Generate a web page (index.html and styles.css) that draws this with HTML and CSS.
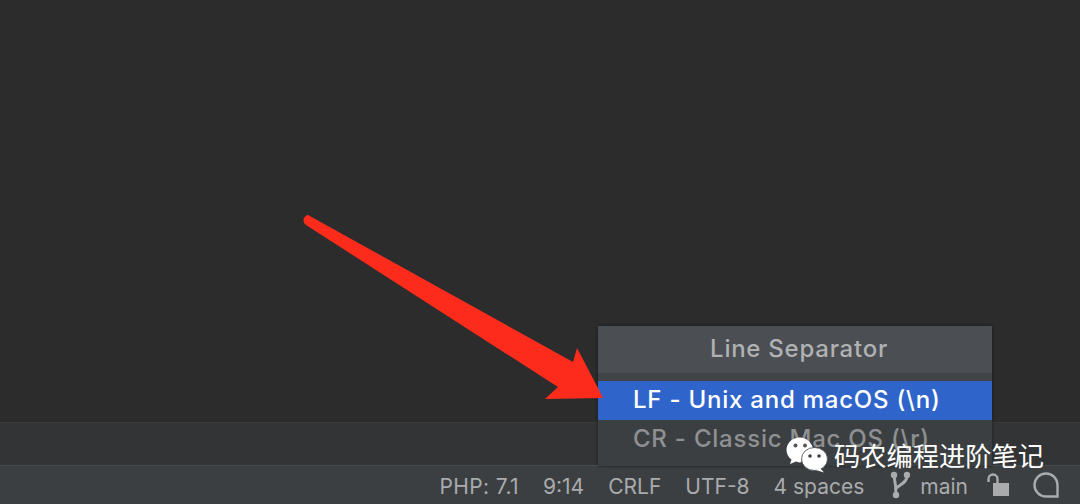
FILE: index.html
```html
<!DOCTYPE html>
<html>
<head>
    <title>Line Separator</title>
    <link rel="stylesheet" href="styles.css">
</head>
<body>
    <div class="editor"></div>
    <div class="toolbar"></div>
    <div class="statusbar">
        <span class="item php">PHP: 7.1</span>
        <span class="item">9:14</span>
        <span class="item">CRLF</span>
        <span class="item">UTF-8</span>
        <span class="item">4 spaces</span>
        <svg class="branch-icon" width="20" height="28" viewBox="0 0 20 28">
            <circle cx="4" cy="4" r="3.200" fill="#a9abad"/>
            <circle cx="17" cy="4" r="3.200" fill="#a9abad"/>
            <circle cx="6" cy="24" r="3.200" fill="#a9abad"/>
            <path d="M4 5 C5 10 6 14 6 24 M17 5 C17 12 10 13 6.500 17" fill="none" stroke="#a9abad" stroke-width="3"/>
        </svg>
        <span class="item main">main</span>
        <svg class="lock-icon" width="22" height="24" viewBox="0 0 22 24">
            <rect x="6" y="10" width="16" height="13" fill="#a9abad"/>
            <path d="M1.500 9 V6 a4.500 4.500 0 0 1 9 0 V10" fill="none" stroke="#a9abad" stroke-width="2.400"/>
        </svg>
        <svg class="bubble-icon" width="26" height="26" viewBox="0 0 26 26">
            <path d="M13 1.500 a11.500 11.500 0 0 1 11.500 11.500 V24.500 H13 A11.500 11.500 0 0 1 13 1.500 Z" fill="none" stroke="#a9abad" stroke-width="2.400"/>
        </svg>
    </div>

    <div class="popup">
        <div class="popup-title">Line Separator</div>
        <div class="popup-gap"></div>
        <div class="popup-row selected">LF - Unix and macOS (\n)</div>
        <div class="popup-row">CR - Classic Mac OS (\r)</div>
    </div>

    <svg class="arrow" width="320" height="200" viewBox="0 0 320 200">
        <path d="M11 5 L276 152 L280 138 C289 155 298 172 306 188 L248 189 L261 177 L9 15 A5.500 5.500 0 0 1 11 5 Z" fill="#fd2b1c"/>
    </svg>

    <div class="watermark">
        <svg class="wechat-icon" width="42" height="36" viewBox="0 0 42 36">
            <path d="M14 0.500 C6.500 0.500 0.500 5.800 0.500 13 C0.500 17 2.500 20.300 5.500 22.500 L4 27 L10 24.500 C11.500 25 13 25.500 14.500 25.500 L27 11 C25 5 20 0.500 14 0.500 Z" fill="#fff"/>
            <ellipse cx="28.500" cy="22" rx="13" ry="11.500" fill="#fff" stroke="#3d4042" stroke-width="0.800"/>
            <path d="M34 31 L38 35.500 L30 33 Z" fill="#fff"/>
            <circle cx="9.500" cy="8.500" r="2" fill="#55585a"/>
            <circle cx="19" cy="8.500" r="2" fill="#55585a"/>
            <circle cx="24" cy="19" r="1.800" fill="#3d4042"/>
            <circle cx="33" cy="19" r="1.800" fill="#3d4042"/>
        </svg>
        <span class="watermark-text">码农编程进阶笔记</span>
    </div>
</body>
</html>
```

FILE: styles.css
```css
html, body {
    height: 100%;
}

body {
    margin: 0;
    position: relative;
    display: flex;
    flex-direction: column;
    overflow: hidden;
    background-color: #2b2b2b;
    font-family: Inter, "Liberation Sans", sans-serif;
}

.editor {
    flex: 1;
    background-color: #2c2c2c;
}

.toolbar {
    height: 42px;
    background-color: #333435;
    border-top: 1px solid #39393a;
}

.statusbar {
    height: 38px;
    display: flex;
    align-items: center;
    justify-content: flex-end;
    padding-right: 21px;
    background-color: #3c3f41;
    border-top: 1px solid #48494a;
    color: #a9abad;
    font-size: 21px;
}

.item {
    margin-left: 24px;
    padding-top: 2px;
    white-space: nowrap;
}

.item.php {
    letter-spacing: 0.4px;
}

.branch-icon {
    margin-left: 26px;
}

.item.main {
    margin-left: 10px;
}

.lock-icon {
    margin-left: 19px;
}

.bubble-icon {
    margin-left: 24px;
}

.popup {
    position: absolute;
    left: 598px;
    top: 326px;
    width: 394px;
    height: 140px;
    background-color: #3c3f41;
    box-shadow: 0 0 3px rgba(0, 0, 0, 0.5);
}

.popup-title {
    height: 47px;
    line-height: 46px;
    padding-left: 8px;
    text-align: center;
    background-color: #4b4e52;
    color: #afb1b3;
    font-size: 24px;
    font-weight: 500;
    letter-spacing: 0.75px;
}

.popup-gap {
    height: 8px;
    background-color: #414446;
}

.popup-row {
    height: 39px;
    line-height: 37px;
    padding-left: 35px;
    color: #8e9092;
    font-size: 24px;
    font-weight: 500;
    letter-spacing: 0.77px;
    white-space: nowrap;
}

.popup-row.selected {
    background-color: #2f65ca;
    color: #fff;
}

.arrow {
    position: absolute;
    left: 297px;
    top: 210px;
}

.watermark {
    position: absolute;
    left: 786px;
    top: 436px;
    display: flex;
    align-items: center;
    gap: 6px;
}

.watermark-text {
    color: #fff;
    font-family: "Noto Sans CJK SC", sans-serif;
    font-size: 26.250px;
    line-height: 38px;
    white-space: nowrap;
}
```
